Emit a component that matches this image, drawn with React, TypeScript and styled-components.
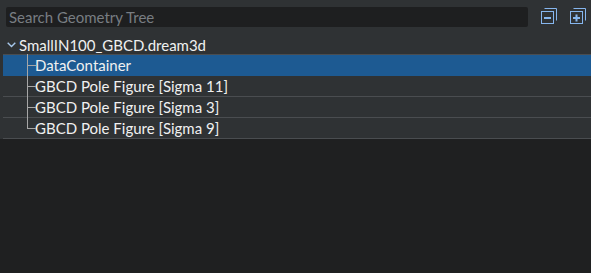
import React from "react";
import styled, { createGlobalStyle } from "styled-components";

const Global = createGlobalStyle`
  html, body { margin: 0; padding: 0; background: #1f2021; }
  body { font-family: Lato, "Open Sans", sans-serif; }
  * { box-sizing: border-box; }
`;

const Panel = styled.div`
  width: 591px;
  height: 273px;
  display: flex;
  flex-direction: column;
  background: #1f2021;
`;

const Toolbar = styled.div`
  display: flex;
  align-items: center;
  height: 34px;
  padding: 0 5px 0 6px;
  background: #2f3234;
`;

const Search = styled.input`
  flex: 1;
  height: 20px;
  margin-top: -1px;
  border: none;
  outline: none;
  border-radius: 2px;
  background: #1e1f20;
  color: #e0e0e0;
  font-family: Lato, sans-serif;
  font-size: 15px;
  padding: 0 3px;
  &::placeholder { color: #787d82; }
`;

const IconButton = styled.button<{ $gap: number }>`
  width: 16px;
  height: 16px;
  padding: 0;
  border: none;
  background: transparent;
  margin-left: ${(p) => p.$gap}px;
  margin-top: -2px;
  display: flex;
`;

const Tree = styled.div`
  display: flex;
  flex-direction: column;
  background: #2f3234;
  padding-left: 3px;
`;

const Row = styled.div<{ $selected?: boolean }>`
  position: relative;
  height: 21px;
  display: flex;
  align-items: center;
  border-bottom: 1px solid ${(p) => (p.$selected ? "#1d5a92" : "#4a4d50")};
  background: ${(p) => (p.$selected ? "#1d5a92" : "#2f3234")};
  color: #f0f0f0;
  font-size: 15px;
  white-space: nowrap;
`;

const RootRow = styled(Row)`
  height: 21px;
  padding-top: 1px;
`;

const RootLabel = styled.span`
  margin-left: 16px;
`;

const Chevron = styled.svg`
  position: absolute;
  left: 4px;
  top: 8px;
`;

const Branch = styled.span<{ $last?: boolean }>`
  position: absolute;
  left: 24px;
  top: ${(p) => (p.$last ? "0" : "-1px")};
  width: 8px;
  height: ${(p) => (p.$last ? "11px" : "22px")};
  border-left: 1px solid #a6a6a6;
  &::after {
    content: "";
    position: absolute;
    left: 0;
    top: ${(p) => (p.$last ? "10px" : "11px")};
    width: 8px;
    border-top: 1px solid #a6a6a6;
  }
`;

const Label = styled.span`
  margin-left: 32px;
  padding-bottom: 1px;
`;

const StackIcon = ({ plus }: { plus?: boolean }) => (
  <svg width="16" height="16" viewBox="0 0 16 16">
    <path d="M3.5 0.5 H15.5 V12.5" fill="none" stroke="#86b6ee" strokeWidth="1" />
    <rect x="0.5" y="3.5" width="12" height="12" fill="none" stroke="#86b6ee" strokeWidth="1" />
    <rect x="3" y="9" width="7" height="2" fill="#86b6ee" />
    {plus && <rect x="5.5" y="6.5" width="2" height="7" fill="#86b6ee" />}
  </svg>
);

const items = [
  "DataContainer",
  "GBCD Pole Figure [Sigma 11]",
  "GBCD Pole Figure [Sigma 3]",
  "GBCD Pole Figure [Sigma 9]",
];

export default function App() {
  return (
    <>
      <Global />
      <Panel>
        <Toolbar>
          <Search placeholder="Search Geometry Tree" />
          <IconButton $gap={13}>
            <StackIcon />
          </IconButton>
          <IconButton $gap={13}>
            <StackIcon plus />
          </IconButton>
        </Toolbar>
        <Tree>
          <RootRow>
            <Chevron width="9" height="6" viewBox="0 0 9 6">
              <path d="M0.7 0.7 L4.5 4.5 L8.3 0.7" fill="none" stroke="#a8c8ec" strokeWidth="1.4" />
            </Chevron>
            <RootLabel>SmallIN100_GBCD.dream3d</RootLabel>
          </RootRow>
          {items.map((t, i) => (
            <Row key={t} $selected={i === 0}>
              <Branch $last={i === items.length - 1} />
              <Label>{t}</Label>
            </Row>
          ))}
        </Tree>
      </Panel>
    </>
  );
}
